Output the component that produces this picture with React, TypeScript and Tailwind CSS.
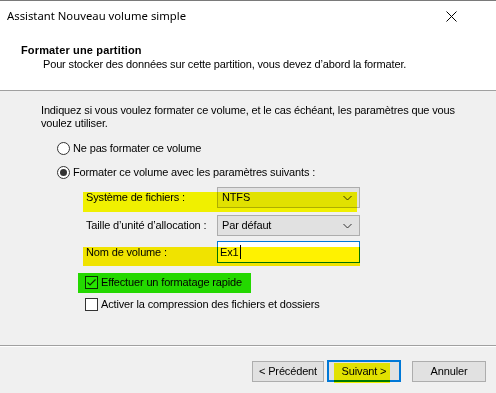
import React from 'react';

function Chevron() {
  return (
    <svg width="9" height="5" viewBox="0 0 9 5" className="absolute right-[7px] top-1/2 -translate-y-1/2">
      <path d="M0.5 0.5 L4.5 4.5 L8.5 0.5" fill="none" stroke="#333" strokeWidth="1" />
    </svg>
  );
}

function Radio({ checked }: { checked?: boolean }) {
  return (
    <span className="w-[13px] h-[13px] rounded-full border border-[#333] bg-white flex items-center justify-center">
      {checked && <span className="w-[7px] h-[7px] rounded-full bg-[#333]" />}
    </span>
  );
}

function Check({ checked }: { checked?: boolean }) {
  return (
    <span className="w-[13px] h-[13px] border border-[#333] bg-white flex items-center justify-center">
      {checked && (
        <svg width="11" height="11" viewBox="0 0 11 11">
          <path d="M1.5 5.5 L4 8 L9.5 2.5" fill="none" stroke="#333" strokeWidth="1.2" />
        </svg>
      )}
    </span>
  );
}

export default function App() {
  return (
    <div
      className="relative w-[496px] h-[393px] overflow-hidden bg-[#f0f0f0] text-[11px] tracking-[-0.15px] text-black"
      style={{ fontFamily: '"Liberation Sans", Arial, sans-serif' }}
    >
      {/* Fond de la fenêtre derrière */}
      <div className="h-px bg-[#7a7a7a]" />

      {/* En-tête blanc */}
      <div className="h-[90px] bg-white border-b border-[#a0a0a0]">
        <div className="h-[30px] flex items-center justify-between pl-[7px] pr-[39px]">
          <span className="text-[11.3px] tracking-normal" style={{ fontFamily: '"Noto Sans", sans-serif' }}>
            Assistant Nouveau volume simple
          </span>
          <svg width="11" height="11" viewBox="0 0 11 11">
            <path d="M0.5 0.5 L10.5 10.5 M10.5 0.5 L0.5 10.5" stroke="#000" strokeWidth="1" />
          </svg>
        </div>
        <div className="pl-[21px] pt-[12px] font-bold tracking-[0.15px] leading-[14px]">Formater une partition</div>
        <div className="pl-[43px] leading-[14px]">
          Pour stocker des données sur cette partition, vous devez d’abord la formater.
        </div>
      </div>

      {/* Corps */}
      <div className="h-[255px] pl-[41px] border-b border-[#a0a0a0]">
        <p className="pt-[13px] leading-[13px] w-[432px]">
          Indiquez si vous voulez formater ce volume, et le cas échéant, les paramètres que vous voulez
          utiliser.
        </p>
        <div className="mt-[10px] ml-[16px] h-[16px] flex items-center gap-[3px]">
          <Radio />
          <span>Ne pas formater ce volume</span>
        </div>
        <div className="mt-[8px] ml-[16px] h-[16px] flex items-center gap-[3px]">
          <Radio checked />
          <span>Formater ce volume avec les paramètres suivants :</span>
        </div>

        <div className="ml-[45px] w-[274px] grid grid-cols-[131px_143px] items-center gap-y-[7px] mt-[7px]">
          <span>Système de fichiers :</span>
          <div className="relative h-[21px] border border-[#adadad] bg-[#e1e1e1] flex items-center pl-[4px]">
            NTFS
            <Chevron />
          </div>
          <span>Taille d’unité d’allocation :</span>
          <div className="relative h-[21px] border border-[#adadad] bg-[#e1e1e1] flex items-center pl-[4px]">
            Par défaut
            <Chevron />
          </div>
          <span className="-mt-[2px]">Nom de volume :</span>
          <div className="-mt-[2px] h-[22px] border border-[#0078d7] bg-white flex items-center pl-[2px]">
            Ex1<span className="ml-px w-px h-[14px] bg-black" />
          </div>
        </div>

        <div className="mt-[11px] ml-[44px] h-[16px] flex items-center gap-[3px]">
          <Check checked />
          <span>Effectuer un formatage rapide</span>
        </div>
        <div className="mt-[6px] ml-[44px] h-[16px] flex items-center gap-[3px]">
          <Check />
          <span>Activer la compression des fichiers et dossiers</span>
        </div>
      </div>
      <div className="h-px bg-white" />

      {/* Boutons */}
      <div className="flex items-start pt-[14px] pl-[252px]">
        <button className="w-[72px] h-[21px] border border-[#adadad] bg-[#e1e1e1]">&lt; Précédent</button>
        <button className="ml-[3px] w-[74px] h-[22px] -mt-px border-2 border-[#0078d7] bg-[#e1e1e1]">
          Suivant &gt;
        </button>
        <button className="ml-[11px] w-[74px] h-[21px] border border-[#adadad] bg-[#e1e1e1]">Annuler</button>
      </div>

      {/* Surlignages */}
      <div className="absolute left-[83px] top-[192px] w-[274px] h-[20px] bg-[#ffff00] mix-blend-multiply" />
      <div className="absolute left-[83px] top-[247px] w-[277px] h-[19px] bg-[#fff200] mix-blend-multiply" />
      <div className="absolute left-[78px] top-[273px] w-[173px] h-[20px] bg-[#26e600] mix-blend-multiply" />
      <div className="absolute left-[334px] top-[363px] w-[56px] h-[20px] bg-[#ffff00] mix-blend-multiply" />
    </div>
  );
}
